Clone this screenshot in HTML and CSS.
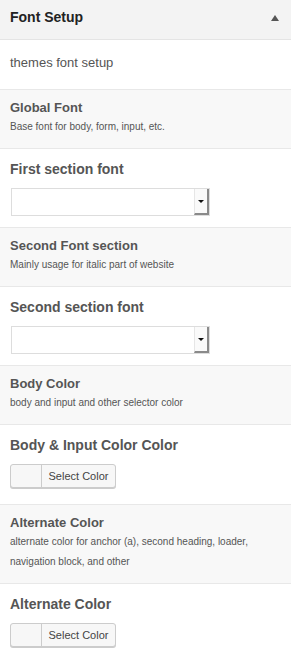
FILE: index.html
```html
<!DOCTYPE html>
<html lang="en">
<head>
    <meta charset="UTF-8">
    <meta name="viewport" content="width=device-width, initial-scale=1.0">
    <title>Font Setup</title>
    <link rel="stylesheet" href="styles.css">
</head>
<body>
    <div class="panel">
        <div class="panel-head">
            <h3>Font Setup</h3>
            <span class="toggle"></span>
        </div>

        <div class="intro">themes font setup</div>

        <div class="info">
            <h4>Global Font</h4>
            <p>Base font for body, form, input, etc.</p>
        </div>
        <div class="field">
            <label>First section font</label>
            <div class="select"><span class="select-btn"><span class="caret"></span></span></div>
        </div>

        <div class="info">
            <h4>Second Font section</h4>
            <p>Mainly usage for italic part of website</p>
        </div>
        <div class="field">
            <label>Second section font</label>
            <div class="select"><span class="select-btn"><span class="caret"></span></span></div>
        </div>

        <div class="info">
            <h4>Body Color</h4>
            <p>body and input and other selector color</p>
        </div>
        <div class="field">
            <label>Body &amp; Input Color Color</label>
            <button type="button" class="color-btn"><span class="swatch"></span><span class="color-text">Select Color</span></button>
        </div>

        <div class="info">
            <h4>Alternate Color</h4>
            <p>alternate color for anchor (a), second heading, loader, navigation block, and other</p>
        </div>
        <div class="field">
            <label>Alternate Color</label>
            <button type="button" class="color-btn"><span class="swatch"></span><span class="color-text">Select Color</span></button>
        </div>
    </div>
</body>
</html>
```

FILE: styles.css
```css
body {
    margin: 0;
    font-family: "Liberation Sans", Arial, sans-serif;
    background: #fff;
}
.panel {
    width: 291px;
}
.panel-head {
    display: flex;
    align-items: center;
    justify-content: space-between;
    height: 40px;
    padding: 0 12px 0 10px;
    box-sizing: border-box;
    background: #f3f3f3;
    border-bottom: 1px solid #e4e4e4;
}
.panel-head h3 {
    margin: 0;
    font-size: 14px;
    color: #222;
    line-height: 18px;
    padding-bottom: 5px;
}
.toggle {
    width: 0;
    height: 0;
    border-left: 4px solid transparent;
    border-right: 4px solid transparent;
    border-bottom: 6px solid #555;
    margin-bottom: 3px;
}
.intro {
    padding: 14px 10px 17px;
    font-size: 13px;
    line-height: 18px;
    color: #555;
    border-bottom: 1px solid #e8e8e8;
}
.info {
    padding: 9px 10px 11px;
    background: #f8f8f8;
    border-bottom: 1px solid #e8e8e8;
}
.info h4 {
    margin: 0;
    font-size: 13px;
    line-height: 18px;
    color: #555;
}
.info p {
    margin: 0;
    font-size: 10px;
    line-height: 20px;
    color: #555;
}
.field {
    padding: 10px 10px 11px;
    border-bottom: 1px solid #e8e8e8;
}
.field label {
    display: block;
    font-size: 14px;
    font-weight: bold;
    line-height: 20px;
    color: #555;
    margin-bottom: 9px;
}
.select {
    display: flex;
    justify-content: flex-end;
    width: 199px;
    height: 28px;
    margin-left: 1px;
    box-sizing: border-box;
    border: 1px solid #ddd;
    background: #fff;
}
.select-btn {
    display: flex;
    align-items: center;
    justify-content: center;
    width: 15px;
    box-sizing: border-box;
    border-left: 1px solid #e6e6e6;
    border-right: 2px solid #8a8a8a;
    border-bottom: 2px solid #8a8a8a;
    background: #fafafa;
}
.caret {
    width: 0;
    height: 0;
    border-left: 3px solid transparent;
    border-right: 3px solid transparent;
    border-top: 3px solid #111;
}
.color-btn {
    display: flex;
    align-items: stretch;
    height: 24px;
    width: 106px;
    padding: 0;
    margin: 0 0 5px;
    border: 1px solid #ccc;
    border-radius: 3px;
    background: #f7f7f7;
    box-shadow: 0 1px 0 #ccc;
    font-family: "Liberation Sans", Arial, sans-serif;
    cursor: pointer;
}
.swatch {
    width: 30px;
    border-right: 1px solid #ccc;
}
.color-text {
    flex: 1;
    font-size: 11px;
    line-height: 22px;
    color: #444;
    text-align: center;
}
```
